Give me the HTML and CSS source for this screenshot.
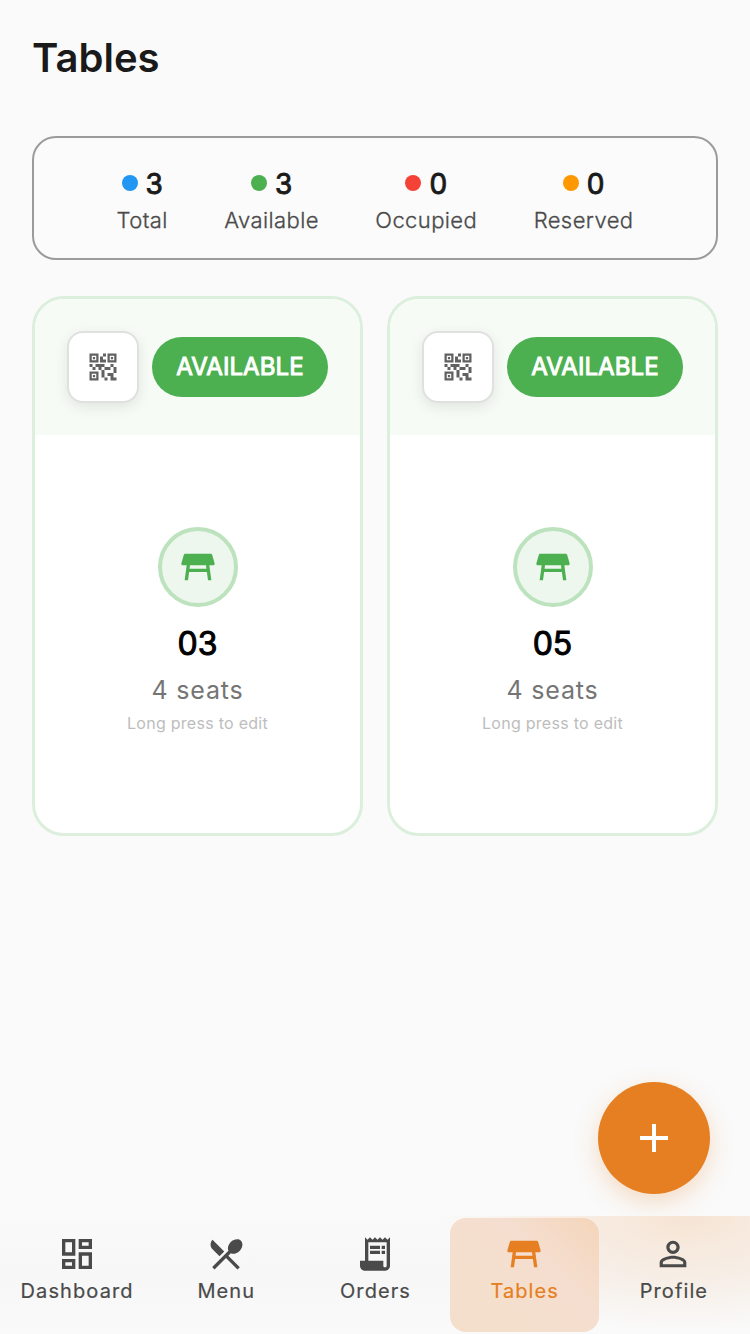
FILE: index.html
```html
<!DOCTYPE html>
<html lang="en">
<head>
<meta charset="utf-8">
<title>Tables</title>
<link rel="stylesheet" href="styles.css">
</head>
<body>
<svg class="defs" aria-hidden="true">
  <symbol id="table" viewBox="0 0 24 24"><path d="M21.96,9.73l-1.43-5C20.41,4.3,20.02,4,19.57,4H4.43C3.98,4,3.59,4.3,3.47,4.73l-1.43,5C1.86,10.36,2.34,11,3,11h2.2L4,20h2l0.67-5h10.67L18,20h2l-1.2-9H21C21.66,11,22.14,10.36,21.96,9.73z M6.93,13l0.27-2h9.6l0.27,2H6.93z"/></symbol>
  <symbol id="qr" viewBox="0 0 24 24"><path d="M15,21h-2v-2h2V21z M13,14h-2v5h2V14z M21,12h-2v4h2V12z M19,10h-2v2h2V10z M7,12H5v2h2V12z M5,10H3v2h2V10z M12,5h2V3h-2V5z M4.5,4.5v3h3v-3H4.5z M9,9H3V3h6V9z M4.5,16.5v3h3v-3H4.5z M9,21H3v-6h6V21z M16.5,4.5v3h3v-3H16.5z M21,9h-6V3h6V9z M19,19v-3l-4,0v2h2v3h4v-2H19z M17,12l-4,0v2h4V12z M13,10H7v2h2v2h2v-2h2V10z M14,9V7h-2V5h-2v4L14,9z M6.75,5.25h-1.5v1.5h1.5V5.25z M6.75,17.25h-1.5v1.5h1.5V17.25z M18.75,5.25h-1.5v1.5h1.5V5.25z"/></symbol>
</svg>
<div class="screen">
  <header class="header"><h1 class="title">Tables</h1></header>
  <main class="main">
    <section class="stats">
      <div class="stat"><div class="count"><i class="dot blue"></i><b>3</b></div><span class="label">Total</span></div>
      <div class="stat"><div class="count"><i class="dot green"></i><b>3</b></div><span class="label">Available</span></div>
      <div class="stat"><div class="count"><i class="dot red"></i><b>0</b></div><span class="label">Occupied</span></div>
      <div class="stat"><div class="count"><i class="dot amber"></i><b>0</b></div><span class="label">Reserved</span></div>
    </section>
    <section class="cards">
      <article class="card">
        <div class="card-top"><button class="qr"><svg><use href="#qr"/></svg></button><span class="badge">AVAILABLE</span></div>
        <div class="card-body"><div class="avatar"><svg><use href="#table"/></svg></div><div class="number">03</div><div class="seats">4 seats</div><div class="hint">Long press to edit</div></div>
      </article>
      <article class="card">
        <div class="card-top"><button class="qr"><svg><use href="#qr"/></svg></button><span class="badge">AVAILABLE</span></div>
        <div class="card-body"><div class="avatar"><svg><use href="#table"/></svg></div><div class="number">05</div><div class="seats">4 seats</div><div class="hint">Long press to edit</div></div>
      </article>
    </section>
  </main>
  <button class="fab" aria-label="Add table"><svg viewBox="0 0 24 24"><path d="M19 13h-6v6h-2v-6H5v-2h6V5h2v6h6v2z"/></svg></button>
  <nav class="nav">
    <a class="item"><svg viewBox="0 0 24 24"><path d="M19 5v2h-4V5h4M9 5v6H5V5h4m10 8v6h-4v-6h4M9 17v2H5v-2h4M21 3h-8v6h8V3zM11 3H3v10h8V3zm10 8h-8v10h8V11zm-10 4H3v6h8v-6z"/></svg><span>Dashboard</span></a>
    <a class="item"><svg viewBox="0 0 24 24"><path d="M8.1 13.34l2.83-2.83L3.91 3.5c-1.56 1.56-1.56 4.09 0 5.66l4.19 4.18zm6.78-1.81c1.53.71 3.68.21 5.27-1.38 1.91-1.91 2.28-4.65.81-6.12-1.46-1.46-4.2-1.1-6.12.81-1.59 1.59-2.09 3.74-1.38 5.27L3.7 19.87l1.41 1.41L12 14.41l6.88 6.88 1.41-1.41L13.41 13l1.47-1.47z"/></svg><span>Menu</span></a>
    <a class="item"><svg viewBox="0 0 24 24"><path d="M19.5 3.5L18 2l-1.5 1.5L15 2l-1.5 1.5L12 2l-1.5 1.5L9 2 7.5 3.5 6 2v14H3v3c0 1.66 1.34 3 3 3h12c1.66 0 3-1.34 3-3V2l-1.5 1.5zM19 19c0 .55-.45 1-1 1s-1-.45-1-1v-3H8V5h11v14z"/><path d="M9 7h6v2H9zM16 7h2v2h-2zM9 10h6v2H9zM16 10h2v2h-2z"/></svg><span>Orders</span></a>
    <a class="item active"><svg><use href="#table"/></svg><span>Tables</span></a>
    <a class="item"><svg viewBox="0 0 24 24"><path d="M12 5.9c1.16 0 2.1.94 2.1 2.1s-.94 2.1-2.1 2.1S9.9 9.16 9.9 8s.94-2.1 2.1-2.1m0 9c2.97 0 6.1 1.46 6.1 2.1v1.1H5.9V17c0-.64 3.13-2.1 6.1-2.1M12 4C9.79 4 8 5.79 8 8s1.79 4 4 4 4-1.79 4-4-1.79-4-4-4zm0 9c-2.67 0-8 1.34-8 4v3h16v-3c0-2.66-5.33-4-8-4z"/></svg><span>Profile</span></a>
  </nav>
</div>
</body>
</html>
```
FILE: styles.css
```css
* { box-sizing: border-box; }
body { margin: 0; background: #fafafa; font-family: Inter, sans-serif; color: #1a1a1a; }
.defs { position: absolute; width: 0; height: 0; }
svg { display: block; fill: currentColor; }
button { border: 0; padding: 0; font: inherit; }
.screen { position: relative; width: 750px; height: 1334px; display: flex; flex-direction: column; overflow: hidden; }
.header { height: 112px; padding: 32px 32px 0; }
.title { margin: 0; font-size: 40px; line-height: 52px; font-weight: 600; letter-spacing: 0; }
.main { flex: 1; padding: 24px 32px 0; }
.stats { height: 124px; border: 2px solid #9b9b9b; border-radius: 24px; display: flex; justify-content: center; gap: 56.5px; padding-top: 30px; background: #fbfbfb; }
.stat { display: flex; flex-direction: column; align-items: center; }
.count { display: flex; align-items: center; gap: 8px; height: 32px; }
.count b { font-size: 28px; line-height: 32px; font-weight: 400; -webkit-text-stroke: .9px currentColor; }
.dot { width: 16px; height: 16px; border-radius: 50%; margin-top: -2px; }
.blue { background: #2196f3; }
.green { background: #4caf50; }
.red { background: #f44336; }
.amber { background: #ff9800; }
.label { font-size: 22px; line-height: 32px; margin-top: 4px; color: #4a4a4a; font-weight: 300; letter-spacing: .4px; -webkit-text-stroke: .3px currentColor; }
.cards { display: grid; grid-template-columns: 1fr 1fr; gap: 24px; margin-top: 36px; }
.card { height: 540px; border: 3px solid #dbefdc; border-radius: 32px; background: #fff; overflow: hidden; }
.card-top { height: 136px; padding: 0 32px; display: flex; align-items: center; justify-content: space-between; background: #f6fbf6; }
.qr { width: 72px; height: 72px; border: 2px solid #e0e0e0; border-radius: 16px; background: #fff; color: #616161; display: grid; place-items: center; box-shadow: 0 4px 14px rgba(0,0,0,.09); }
.qr svg { width: 36px; height: 36px; }
.badge { width: 176px; height: 60px; border-radius: 30px; background: #4caf50; color: #fff; font-size: 24px; font-weight: 400; letter-spacing: .1px; -webkit-text-stroke: 1px currentColor; line-height: 60px; text-align: center; }
.card-body { display: flex; flex-direction: column; align-items: center; padding-top: 92px; }
.avatar { width: 80px; height: 80px; border: 4px solid #bce2be; border-radius: 50%; background: #edf7ee; color: #4caf50; display: grid; place-items: center; }
.avatar svg, .item svg { width: 40px; height: 40px; }
.number { margin-top: 17px; font-size: 32px; line-height: 40px; font-weight: 400; -webkit-text-stroke: 1px currentColor; color: #000; }
.seats { margin-top: 10px; font-size: 25px; line-height: 32px; color: #757575; font-weight: 400; letter-spacing: .8px; }
.hint { margin-top: 7px; font-size: 16px; line-height: 20px; color: #bdbdbd; letter-spacing: .27px; }
.fab { position: absolute; left: 598px; top: 1082px; width: 112px; height: 112px; border-radius: 50%; background: #e67e22; color: #fff; display: grid; place-items: center; box-shadow: 0 8px 24px rgba(230,126,34,.25); }
.fab svg { width: 48px; height: 48px; }
.nav { position: relative; height: 118px; padding: 2px; display: grid; grid-template-columns: repeat(5, 1fr); background: radial-gradient(ellipse 245px 115px at 685px 0, rgba(246,227,210,.95), rgba(246,227,210,.5) 50%, rgba(246,227,210,0)), linear-gradient(#fafafa, #f7f7f7 50%, #fafafa); }
.item { height: 114px; padding-top: 16px; display: flex; flex-direction: column; align-items: center; color: #4a4a4a; border-radius: 16px; }
.item span { margin-top: 5px; padding-left: 1px; font-size: 20px; line-height: 24px; font-weight: 400; letter-spacing: 1.1px; -webkit-text-stroke: .2px currentColor; }
.active { color: #e67e22; background: linear-gradient(45deg, #f4dfcb, #f5decf 65%, #f4d5b9); }
```
